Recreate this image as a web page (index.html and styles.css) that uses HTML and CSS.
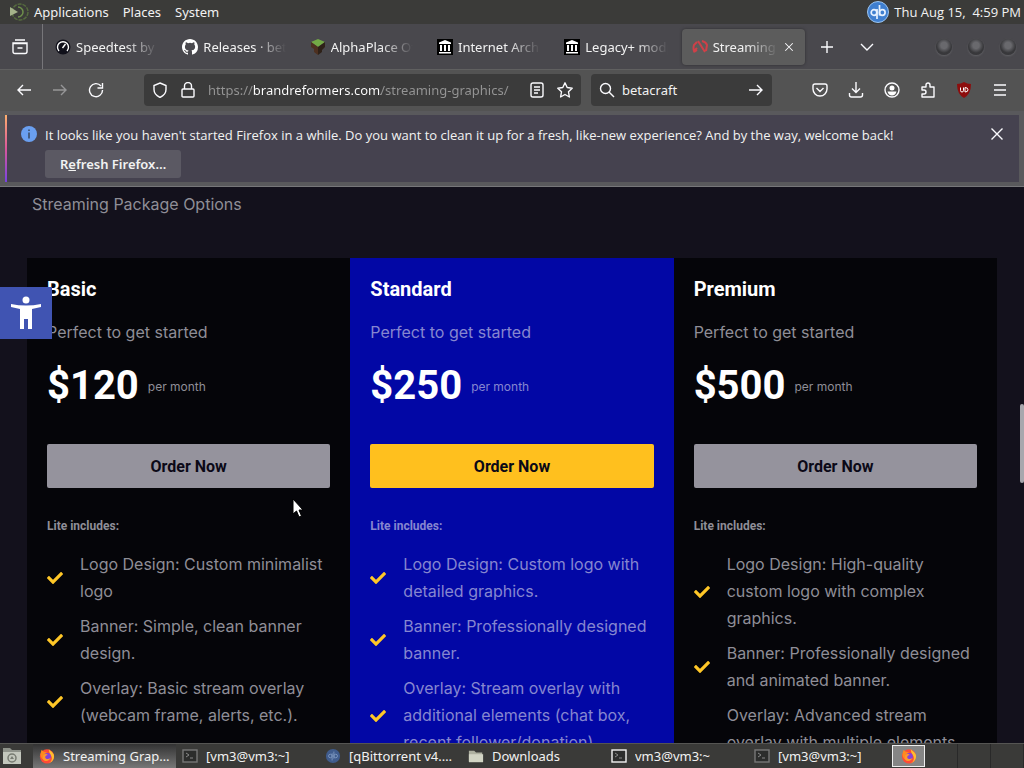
FILE: index.html
```html
<!DOCTYPE html>
<html lang="en">
  <head>
    <meta charset="UTF-8" />
    <meta name="viewport" content="width=device-width, initial-scale=1.0" />
    <title>Streaming Graphics</title>
    <link rel="stylesheet" href="styles.css">
  </head>
  <body>
    <svg class="sprite" aria-hidden="true">
      <symbol id="check" viewBox="0 0 512 512">
        <path d="M173.9 439.4 7.5 273c-10-10-10-26.200 0-36.200l36.200-36.200c10-10 26.200-10 36.200 0L192 312.700 432.100 72.600c10-10 26.200-10 36.200 0l36.200 36.200c10 10 10 26.200 0 36.200L210.100 439.400c-10 10-26.200 10-36.200 0z" />
      </symbol>
      <symbol id="archive" viewBox="0 0 16 16">
        <path fill="#000" d="M0 0h16v16H0z" />
        <path fill="#fff" d="M8 1l6 2.500V5H2V3.500zM3 6h2v6H3zM7 6h2v6H7zM11 6h2v6h-2zM2 13h12v1.500H2z" />
      </symbol>
      <symbol id="firefox" viewBox="0 0 18 18">
        <circle cx="9" cy="9.500" r="8" fill="#ff4b36" />
        <path fill="#ffbd2e" d="M11 1c1 2 4 3 5.500 6 1.500 4-1 9-6 10.300 4-2 5-6 3-9C12 6 11 4 11 1z" />
        <path fill="#ff8a1f" d="M2 5l1-3 2 2 4 1-3 3-1 5c-3-2-4-5-3-8z" />
        <circle cx="9.500" cy="9.500" r="3.800" fill="#8543d8" />
        <path fill="#ff9a2b" d="M5 8c2-2 4-1 5 0-2 0-3 1-3 3 1 2 4 2 6 0-1 4-7 5-9 1z" />
      </symbol>
      <symbol id="terminal" viewBox="0 0 16 16">
        <rect x="1" y="2" width="14" height="12" fill="#2c2d2c" stroke="currentColor" stroke-width="1.400" />
        <path d="M4 5l3 2-3 2M8 10h3" fill="none" stroke="#888" />
      </symbol>
      <symbol id="folder" viewBox="0 0 18 16">
        <path fill="#aeb0a0" d="M1 2h6l2 2h7v10H1z" />
        <path fill="#d2d4c4" d="M1 15V6h16v9z" />
      </symbol>
    </svg>

    <header class="panel">
      <nav class="panel-menu">
        <svg class="panel-logo" viewBox="0 0 20 20">
          <circle cx="11" cy="10" r="8" fill="none" stroke="#566b3f" stroke-width="1.500" stroke-dasharray="4 1" />
          <path d="M9 5a5 5 0 1 1 0 10" fill="none" stroke="#6e8f4b" stroke-width="1.500" />
          <path d="M1 5l8 5-8 4z" fill="#a5b38a" />
        </svg>
        <button>Applications</button>
        <button>Places</button>
        <button>System</button>
      </nav>
      <div class="panel-tray">
        <svg class="tray-icon" viewBox="0 0 22 22">
          <circle cx="11" cy="11" r="10.500" fill="#3f7fd0" stroke="#9cc4ef" />
          <g fill="none" stroke="#e6f1ff" stroke-width="1.700">
            <circle cx="7" cy="11.500" r="2.800" />
            <path d="M10 8v10M12.500 4v10.500" />
            <circle cx="15.300" cy="11.500" r="2.800" />
          </g>
        </svg>
        <time>Thu Aug 15,&nbsp; 4:59 PM</time>
      </div>
    </header>

    <div class="tabbar">
      <button class="recent" aria-label="Recent browsing">
        <svg class="line" viewBox="0 0 16 16"><path d="M3 1h10M1 4.500h14v8q0 2-2 2H3q-2 0-2-2zM1 5V4h14v1M5.500 9h5" /></svg>
      </button>
      <div class="tabs" role="tablist">
        <button class="tab" role="tab">
          <svg viewBox="0 0 16 16"><circle cx="8" cy="8" r="7.500" fill="#10101a" /><path d="M4 12a5.500 5.500 0 1 1 8 0M7.500 9l3-4" fill="none" stroke="#fff" stroke-width="1.400" /></svg>
          <span>Speedtest by Ookla</span>
        </button>
        <button class="tab" role="tab">
          <svg viewBox="0 0 16 16"><path fill="#fff" d="M8 0C3.580 0 0 3.580 0 8c0 3.540 2.290 6.530 5.470 7.590.4.070.55-.17.55-.38 0-.19-.01-.82-.01-1.490-2.010.37-2.530-.49-2.690-.94-.09-.23-.48-.94-.82-1.130-.28-.15-.68-.52-.01-.53.63-.01 1.080.58 1.230.82.72 1.210 1.870.87 2.330.66.070-.52.28-.87.51-1.070-1.780-.2-3.640-.89-3.640-3.950 0-.87.31-1.590.82-2.150-.08-.2-.36-1.020.08-2.120 0 0 .67-.21 2.200.82a7.600 7.600 0 0 1 4 0c1.530-1.040 2.200-.82 2.200-.82.44 1.100.16 1.920.08 2.120.51.56.82 1.270.82 2.150 0 3.070-1.870 3.750-3.650 3.950.29.25.54.73.54 1.480 0 1.070-.01 1.930-.01 2.200 0 .21.15.46.55.38A8 8 0 0 0 16 8c0-4.420-3.580-8-8-8z" /></svg>
          <span>Releases · betacraft</span>
        </button>
        <button class="tab" role="tab">
          <svg viewBox="0 0 16 16"><path fill="#73a946" d="M1 3l7-3 7 3-7 5z" /><path fill="#4d3020" d="M1 3l7 5v8l-4-3v-3L1 8z" /><path fill="#2e2118" d="M15 3L8 8v8l4-3v-2l3-3z" /></svg>
          <span>AlphaPlace Official</span>
        </button>
        <button class="tab" role="tab">
          <svg><use href="#archive" /></svg>
          <span>Internet Archive</span>
        </button>
        <button class="tab" role="tab">
          <svg><use href="#archive" /></svg>
          <span>Legacy+ modpack</span>
        </button>
        <button class="tab active" role="tab" aria-selected="true">
          <svg viewBox="0 0 16 16"><g fill="none" stroke="#cf4048" stroke-width="2"><path d="M5 3L2 6q-1 3 0 6l3-3M6 2l7 11M10 2q4 1 5 4l-1 6M2 13l3-2" /></g></svg>
          <span>Streaming Graphics</span>
          <svg class="tab-close line" viewBox="0 0 16 16"><path d="M3 3l10 10M13 3L3 13" /></svg>
        </button>
      </div>
      <button class="tool" aria-label="New tab"><svg class="line" viewBox="0 0 16 16"><path d="M8 2v12M2 8h12" /></svg></button>
      <button class="tool" aria-label="List all tabs"><svg class="line" viewBox="0 0 16 16"><path d="M2 5l6 6 6-6" /></svg></button>
      <div class="window-buttons">
        <button aria-label="Minimize"></button>
        <button aria-label="Maximize"></button>
        <button aria-label="Close"></button>
      </div>
    </div>

    <div class="toolbar">
      <div class="tool-group">
        <button class="tool" aria-label="Back"><svg class="line" viewBox="0 0 16 16"><path d="M15 8H2M7 3L2 8l5 5" /></svg></button>
        <button class="tool" aria-label="Forward" disabled><svg class="line" viewBox="0 0 16 16"><path d="M1 8h13M9 3l5 5-5 5" /></svg></button>
        <button class="tool" aria-label="Reload"><svg class="line" viewBox="0 0 16 16"><path d="M13 4A6.500 6.500 0 1 0 14.500 8M14.500 1v5h-5" /></svg></button>
      </div>
      <div class="field url-field">
        <svg class="line" viewBox="0 0 16 16"><path d="M8 1l6 2.500v4q0 5-6 8-6-3-6-8v-4z" /></svg>
        <svg class="line" viewBox="0 0 16 16"><path d="M4.500 7V4a3.500 3.500 0 0 1 7 0v3M2 8q0-1 1-1h10q1 0 1 1v6q0 1-1 1H3q-1 0-1-1z" /></svg>
        <input class="url" type="text" aria-label="Address" value="https://brandreformers.com/streaming-graphics/" />
        <svg class="line" viewBox="0 0 16 16"><path d="M2 3q0-2 2-2h8q2 0 2 2v10q0 2-2 2H4q-2 0-2-2zM5 5h6M5 8h6M5 11h4" /></svg>
        <svg class="line" viewBox="0 0 16 16"><path stroke-linejoin="round" d="M8 .8l2.200 4.700 5 .7-3.700 3.600.9 5.200L8 12.500 3.600 15l.9-5.200L.8 6.200l5-.7z" /></svg>
      </div>
      <div class="field search-field">
        <svg class="line" viewBox="0 0 16 16"><circle cx="6.500" cy="6.500" r="5" /><path d="M10 10l5 5" /></svg>
        <input type="text" aria-label="Search" value="betacraft" />
        <svg class="line" viewBox="0 0 16 16"><path d="M1 8h13M9 3l5 5-5 5" /></svg>
      </div>
      <div class="tool-group">
        <button class="tool" aria-label="Pocket"><svg class="line" viewBox="0 0 16 16"><path d="M1 4q0-2 2-2h10q2 0 2 2v3a7 7 0 0 1-14 0zM4.500 6L8 9.500 11.500 6" /></svg></button>
        <button class="tool" aria-label="Downloads"><svg class="line" viewBox="0 0 16 16"><path d="M8 0v10M4 6.500L8 10.500l4-4M1.500 11v2q0 2 2 2h9q2 0 2-2v-2" /></svg></button>
        <button class="tool" aria-label="Account"><svg class="line" viewBox="0 0 16 16"><circle cx="8" cy="8" r="7" /><circle cx="8" cy="6" r="2.500" fill="#fff" stroke="none" /><path fill="#fff" stroke="none" d="M3.500 9.500h9q-1 4-4.500 4t-4.500-4z" /></svg></button>
        <button class="tool" aria-label="Extensions"><svg class="line" viewBox="0 0 16 16"><path stroke-linejoin="round" d="M6 5V3a2 2 0 0 1 4 0v2h4v10H2v-3h2a2 2 0 0 0 0-4H2V5z" /></svg></button>
        <button class="tool" aria-label="uBlock Origin">
          <svg viewBox="0 0 16 16"><path fill="#8d0d0d" d="M8 0q3 2 7 2 0 10-7 14Q1 12 1 2q4 0 7-2z" /><path d="M4.500 5.500v3q0 1.500 1.500 1.500t1.500-1.500v-3M9 5.500V10q3 0 3-2.200T9 5.500z" fill="none" stroke="#fff" /></svg>
        </button>
        <button class="tool" aria-label="Menu"><svg class="line" viewBox="0 0 16 16"><path d="M2 3h12M2 8h12M2 13h12" /></svg></button>
      </div>
    </div>

    <div class="notice-wrap">
      <div class="notice">
        <svg class="info" viewBox="0 0 16 16"><circle cx="8" cy="8" r="8" fill="#6a9ff0" /><path d="M8 3.500v1.500M8 6.500v6" stroke="#39485f" stroke-width="1.500" /></svg>
        <div class="notice-body">
          <p>It looks like you haven't started Firefox in a while. Do you want to clean it up for a fresh, like-new experience? And by the way, welcome back!</p>
          <button class="refresh">R<u>e</u>fresh Firefox…</button>
        </div>
        <button class="notice-close" aria-label="Close message"><svg class="line" viewBox="0 0 16 16"><path d="M2.500 2.500l11 11M13.500 2.500l-11 11" /></svg></button>
      </div>
    </div>

    <main class="page">
      <p class="subtitle">Streaming Package Options</p>
      <div class="plans">
        <section class="plan">
          <h3>Basic</h3>
          <p class="lead">Perfect to get started</p>
          <p class="price"><strong>$120</strong> <small>per month</small></p>
          <button class="order">Order Now</button>
          <h6>Lite includes:</h6>
          <ul>
            <li><svg><use href="#check" /></svg><span>Logo Design: Custom minimalist logo</span></li>
            <li><svg><use href="#check" /></svg><span>Banner: Simple, clean banner design.</span></li>
            <li><svg><use href="#check" /></svg><span>Overlay: Basic stream overlay (webcam frame, alerts, etc.).</span></li>
          </ul>
        </section>
        <section class="plan featured">
          <h3>Standard</h3>
          <p class="lead">Perfect to get started</p>
          <p class="price"><strong>$250</strong> <small>per month</small></p>
          <button class="order">Order Now</button>
          <h6>Lite includes:</h6>
          <ul>
            <li><svg><use href="#check" /></svg><span>Logo Design: Custom logo with detailed graphics.</span></li>
            <li><svg><use href="#check" /></svg><span>Banner: Professionally designed banner.</span></li>
            <li><svg><use href="#check" /></svg><span>Overlay: Stream overlay with additional elements (chat box, recent follower/donation).</span></li>
          </ul>
        </section>
        <section class="plan">
          <h3>Premium</h3>
          <p class="lead">Perfect to get started</p>
          <p class="price"><strong>$500</strong> <small>per month</small></p>
          <button class="order">Order Now</button>
          <h6>Lite includes:</h6>
          <ul>
            <li><svg><use href="#check" /></svg><span>Logo Design: High-quality custom logo with complex graphics.</span></li>
            <li><svg><use href="#check" /></svg><span>Banner: Professionally designed and animated banner.</span></li>
            <li><svg><use href="#check" /></svg><span>Overlay: Advanced stream overlay with multiple elements (chat box, recent follower/donation, custom alerts).</span></li>
          </ul>
        </section>
      </div>
      <button class="accessibility" aria-label="Accessibility tools">
        <svg viewBox="0 0 32 34"><circle cx="16" cy="4" r="3.500" /><path d="M1 8q15 3 30 0v3l-9 2v20h-4V23h-4v10h-4V13l-9-2z" /></svg>
      </button>
      <div class="scroll-thumb"></div>
      <svg class="cursor" viewBox="0 0 12 20"><path d="M1 1v15l3.500-3 2.500 6 2.500-1-2.500-6h4z" fill="#fff" stroke="#000" /></svg>
    </main>

    <footer class="taskbar">
      <button class="desktop" aria-label="Show desktop">
        <svg viewBox="0 0 20 18"><path fill="#8f938b" d="M1 1h7l2 2h9v14H1z" /><path fill="#c3c7bd" d="M1 5h18v12H1z" /><circle cx="10" cy="11" r="4" fill="none" stroke="#777b72" stroke-width="1.500" /><path d="M8 12l2-3 2 3z" fill="#777b72" /></svg>
      </button>
      <div class="tasks">
        <button class="task active"><svg><use href="#firefox" /></svg><span>Streaming Graphics</span></button>
        <button class="task dim"><svg><use href="#terminal" /></svg><span>[vm3@vm3:~]</span></button>
        <button class="task"><svg viewBox="0 0 18 18"><circle cx="9" cy="9" r="8" fill="#405c8d" /><path d="M8 6v8M10 4v8" stroke="#7e98c0" /><circle cx="6" cy="9" r="2" fill="none" stroke="#7e98c0" /><circle cx="12" cy="9" r="2" fill="none" stroke="#7e98c0" /></svg><span>[qBittorrent v4.6.3]</span></button>
        <button class="task"><svg><use href="#folder" /></svg><span>Downloads</span></button>
        <button class="task"><svg><use href="#terminal" /></svg><span>vm3@vm3:~</span></button>
        <button class="task dim"><svg><use href="#terminal" /></svg><span>[vm3@vm3:~]</span></button>
      </div>
      <div class="workspaces">
        <button class="current" aria-label="Workspace 1"><svg><use href="#firefox" /></svg></button>
        <button aria-label="Workspace 2"></button>
        <button aria-label="Workspace 3"></button>
        <button aria-label="Workspace 4"></button>
      </div>
    </footer>
  </body>
</html>
```
FILE: styles.css
```css
* {
  box-sizing: border-box;
  margin: 0;
  padding: 0;
}

body {
  height: 100vh;
  display: flex;
  flex-direction: column;
  overflow: hidden;
  background: #13111c;
  color: #f2f2f2;
  font-family: "Noto Sans", sans-serif;
  font-size: 13px;
}

button,
input {
  font: inherit;
  color: inherit;
  background: none;
  border: 0;
}

svg {
  width: 16px;
  height: 16px;
  flex: none;
}

.sprite {
  display: none;
}

.line {
  fill: none;
  stroke: #fbfbfe;
  stroke-width: 1.4px;
}

/* Top panel */
.panel {
  height: 24px;
  flex: none;
  display: flex;
  align-items: center;
  justify-content: space-between;
  padding: 0 3px 0 9px;
  background: #3b3b39;
}

.panel-menu {
  display: flex;
  align-items: center;
  gap: 14px;
}

.panel-logo {
  width: 20px;
  height: 20px;
  margin-right: -9px;
}

.panel-tray {
  display: flex;
  align-items: center;
  gap: 5px;
  font-family: "Open Sans", sans-serif;
}

.tray-icon {
  width: 22px;
  height: 22px;
}

/* Tabs */
.tabbar {
  height: 46px;
  flex: none;
  display: flex;
  align-items: center;
  background: #49484d;
  border-bottom: 1px solid #606060;
}

.recent {
  width: 43px;
  height: 100%;
  flex: none;
  padding-right: 3px;
  border-right: 1px solid #77767a;
}

.recent svg,
.tool svg {
  display: block;
  margin: auto;
}

.tabs {
  display: flex;
  flex: 0 1 764px;
  min-width: 0;
}

.tab {
  flex: 1 1 0;
  min-width: 0;
  height: 36px;
  display: flex;
  align-items: center;
  gap: 5px;
  margin: 0 2px;
  padding: 0 10px;
  border-radius: 4px;
}

.tab span {
  flex: 1;
  overflow: hidden;
  white-space: nowrap;
  text-align: left;
  mask-image: linear-gradient(to left, transparent, #000 32px);
}

.tab.active {
  background: #5c5c5c;
  box-shadow: 0 0 3px #2d2d30;
}

.tab-close {
  width: 12px;
  height: 12px;
}

.tool {
  width: 36px;
  height: 32px;
  flex: none;
}

.tool:disabled {
  opacity: 0.4;
}

.tabbar > .tool {
  width: 40px;
}

.window-buttons {
  display: flex;
  gap: 16px;
  margin-left: auto;
  padding-right: 8px;
}

.window-buttons button {
  width: 16px;
  height: 16px;
  border-radius: 50%;
  background: radial-gradient(circle at 50% 40%, #69696d 25%, #38383b 60%);
  box-shadow: 0 1px 2px #626266;
}

/* Navigation toolbar */
.toolbar {
  height: 41px;
  flex: none;
  display: flex;
  align-items: center;
  padding: 0 6px 2px;
  background: #535353;
}

.tool-group {
  display: flex;
}

.field {
  height: 32px;
  display: flex;
  align-items: center;
  gap: 12px;
  padding: 0 8px;
  border-radius: 4px;
  background: #3b3b3b;
}

.field input {
  flex: 1;
  width: 0;
  min-width: 0;
  outline: 0;
}

.url-field {
  flex: 437 1 437px;
  margin-left: 30px;
}

/* Only the host part of the address is bright */
.field .url {
  color: transparent;
  background: linear-gradient(90deg, #959595 45px, #fff 45px, #fff 173px, #959595 173px);
  background-clip: text;
  -webkit-background-clip: text;
}

.search-field {
  flex: 181 1 181px;
  gap: 7px;
  margin: 0 30px 0 10px;
}

/* Message bar */
.notice-wrap {
  flex: none;
  padding: 4px 5px 4px;
  background: #59595c;
  border-bottom: 1px solid #77777a;
}

.notice {
  display: flex;
  align-items: flex-start;
  gap: 8px;
  min-height: 67px;
  padding: 11px 14px 0;
  background: #45424f;
  border-left: 2px solid;
  border-image: linear-gradient(#ffb26b, #d9579b, #7542e5) 1;
}

.notice-body {
  flex: 1;
  line-height: 18px;
}

.notice-body p {
  font-family: "Open Sans", sans-serif;
}

.refresh {
  height: 28px;
  margin-top: 6px;
  padding: 0 15px;
  border-radius: 3px;
  background: #5b5963;
  font-weight: 600;
}

.notice-close {
  height: 16px;
}

/* Web page */
.page {
  flex: 1;
  min-height: 0;
  position: relative;
  overflow: hidden;
  padding: 4px 27px 0;
  color: #8f8e97;
  font-family: Inter, sans-serif;
  font-size: 16px;
  line-height: 27px;
}

.subtitle {
  padding-left: 5px;
}

.plans {
  display: grid;
  grid-template-columns: repeat(3, 1fr);
  margin-top: 40px;
}

.plan {
  padding: 18px 20px;
  background: #050509;
}

.plan h3 {
  color: #fff;
  font: bold 20px/26px Roboto, sans-serif;
}

.lead {
  margin-top: 17px;
}

.price {
  display: flex;
  align-items: center;
  gap: 9px;
  margin-top: 16px;
}

.price strong {
  color: #fff;
  font: bold 40px/48px Roboto, sans-serif;
}

.price small {
  font-size: 12px;
}

.order {
  display: block;
  width: 100%;
  height: 44px;
  margin-top: 34px;
  border-radius: 2px;
  background: #95939d;
  color: #0b0917;
  font: bold 16px Roboto, sans-serif;
}

.plan h6 {
  margin-top: 28px;
  font: bold 12px/20px Roboto, sans-serif;
}

.plan ul {
  display: grid;
  gap: 8px;
  margin-top: 15px;
  list-style: none;
}

.plan li {
  display: flex;
  align-items: center;
  gap: 17px;
}

.plan li svg {
  fill: #ffc727;
}

.featured {
  background: #0207a5;
  color: #8686d0;
}

.featured .order {
  background: #ffc01e;
}

.accessibility {
  position: absolute;
  left: 0;
  top: 100px;
  width: 52px;
  height: 52px;
  background: #4054b2;
}

.accessibility svg {
  display: block;
  width: 32px;
  height: 34px;
  margin: auto;
  fill: #fff;
}

.scroll-thumb {
  position: absolute;
  right: 0;
  top: 217px;
  width: 4px;
  height: 79px;
  border-radius: 2px;
  background: #a8a7ad;
}

.cursor {
  position: absolute;
  left: 292px;
  top: 311px;
  width: 12px;
  height: 20px;
}

/* Bottom taskbar */
.taskbar {
  height: 25px;
  flex: none;
  display: flex;
  background: #3a3a38;
  border-top: 1px solid #555553;
}

.desktop {
  width: 33px;
  padding-left: 2px;
  text-align: left;
}

.desktop svg {
  display: block;
  width: 20px;
  height: 18px;
}

.tasks {
  flex: 1;
  min-width: 0;
  display: grid;
  grid-template-columns: repeat(6, 1fr);
}

.task {
  min-width: 0;
  display: flex;
  align-items: center;
  gap: 8px;
  padding: 0 4px 0 6px;
}

.task span {
  overflow: hidden;
  text-overflow: ellipsis;
  white-space: nowrap;
}

.task.active {
  background: linear-gradient(#333, #777);
}

.task.dim svg {
  color: #777;
}

.workspaces {
  display: grid;
  grid-template-columns: repeat(4, 33px);
  padding-left: 1px;
}

.workspaces button {
  display: flex;
  align-items: center;
  justify-content: center;
  border-right: 1px solid #292929;
}

.workspaces .current {
  margin: 1px 0;
  border: 1px solid #eee;
  background: #858585;
}
```
